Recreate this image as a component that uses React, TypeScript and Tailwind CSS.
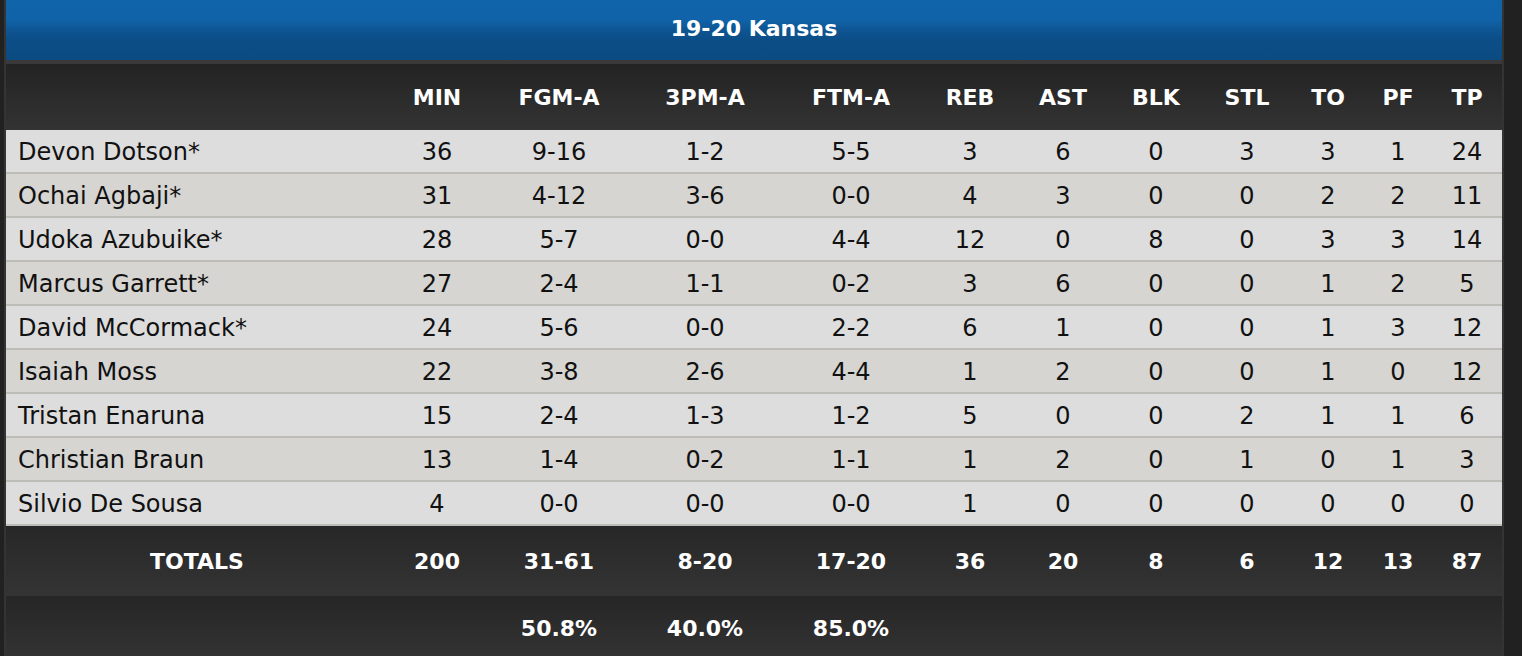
import React from "react";

const cols =
  "grid grid-cols-[382px_98px_146px_146px_146px_92px_94px_92px_90px_72px_68px_70px]";

const headers = ["MIN", "FGM-A", "3PM-A", "FTM-A", "REB", "AST", "BLK", "STL", "TO", "PF", "TP"];

const players: [string, ...string[]][] = [
  ["Devon Dotson*", "36", "9-16", "1-2", "5-5", "3", "6", "0", "3", "3", "1", "24"],
  ["Ochai Agbaji*", "31", "4-12", "3-6", "0-0", "4", "3", "0", "0", "2", "2", "11"],
  ["Udoka Azubuike*", "28", "5-7", "0-0", "4-4", "12", "0", "8", "0", "3", "3", "14"],
  ["Marcus Garrett*", "27", "2-4", "1-1", "0-2", "3", "6", "0", "0", "1", "2", "5"],
  ["David McCormack*", "24", "5-6", "0-0", "2-2", "6", "1", "0", "0", "1", "3", "12"],
  ["Isaiah Moss", "22", "3-8", "2-6", "4-4", "1", "2", "0", "0", "1", "0", "12"],
  ["Tristan Enaruna", "15", "2-4", "1-3", "1-2", "5", "0", "0", "2", "1", "1", "6"],
  ["Christian Braun", "13", "1-4", "0-2", "1-1", "1", "2", "0", "1", "0", "1", "3"],
  ["Silvio De Sousa", "4", "0-0", "0-0", "0-0", "1", "0", "0", "0", "0", "0", "0"],
];

const totals = ["200", "31-61", "8-20", "17-20", "36", "20", "8", "6", "12", "13", "87"];
const pcts = ["", "50.8%", "40.0%", "85.0%", "", "", "", "", "", "", ""];

export default function App() {
  return (
    <div className="w-[1522px] h-[656px] overflow-hidden bg-[#212121] pl-[4px] font-['DejaVu_Sans',Verdana,sans-serif]">
      <div className="w-[1500px] border-x-2 border-[#343434] flex flex-col">
        <div className="h-[60px] pb-[3px] flex items-center justify-center bg-[linear-gradient(to_bottom,#1064a9_0%,#1063a8_33%,#0e5695_48%,#0c4e87_65%,#0b4b82_100%)] text-white font-bold text-[22px]">
          19-20 Kansas
        </div>
        <div className="h-[4px] bg-[#393939]" />
        <div className={`${cols} h-[66px] items-center bg-[linear-gradient(to_bottom,#232323,#333333)] text-white font-bold text-[22px]`}>
          <div />
          {headers.map((h) => (
            <div key={h} className="text-center">
              {h}
            </div>
          ))}
        </div>
        {players.map((p, i) => (
          <div
            key={p[0]}
            className={`${cols} h-[44px] pt-[2px] items-center border-b-2 border-[#bdbcb7] text-[24px] text-[#111111] ${
              i % 2 === 0 ? "bg-[#dddddd]" : "bg-[#d6d5d1]"
            }`}
          >
            <div className="pl-[12px] whitespace-nowrap">{p[0]}</div>
            {p.slice(1).map((v, j) => (
              <div key={j} className="text-center">
                {v}
              </div>
            ))}
          </div>
        ))}
        <div className={`${cols} h-[70px] items-center bg-[linear-gradient(to_bottom,#272727,#343434)] text-white font-bold text-[22px]`}>
          <div className="text-center">TOTALS</div>
          {totals.map((v, j) => (
            <div key={j} className="text-center">
              {v}
            </div>
          ))}
        </div>
        <div className={`${cols} h-[64px] items-center bg-[linear-gradient(to_bottom,#262626,#333333)] text-white font-bold text-[22px]`}>
          <div />
          {pcts.map((v, j) => (
            <div key={j} className="text-center">
              {v}
            </div>
          ))}
        </div>
      </div>
    </div>
  );
}
